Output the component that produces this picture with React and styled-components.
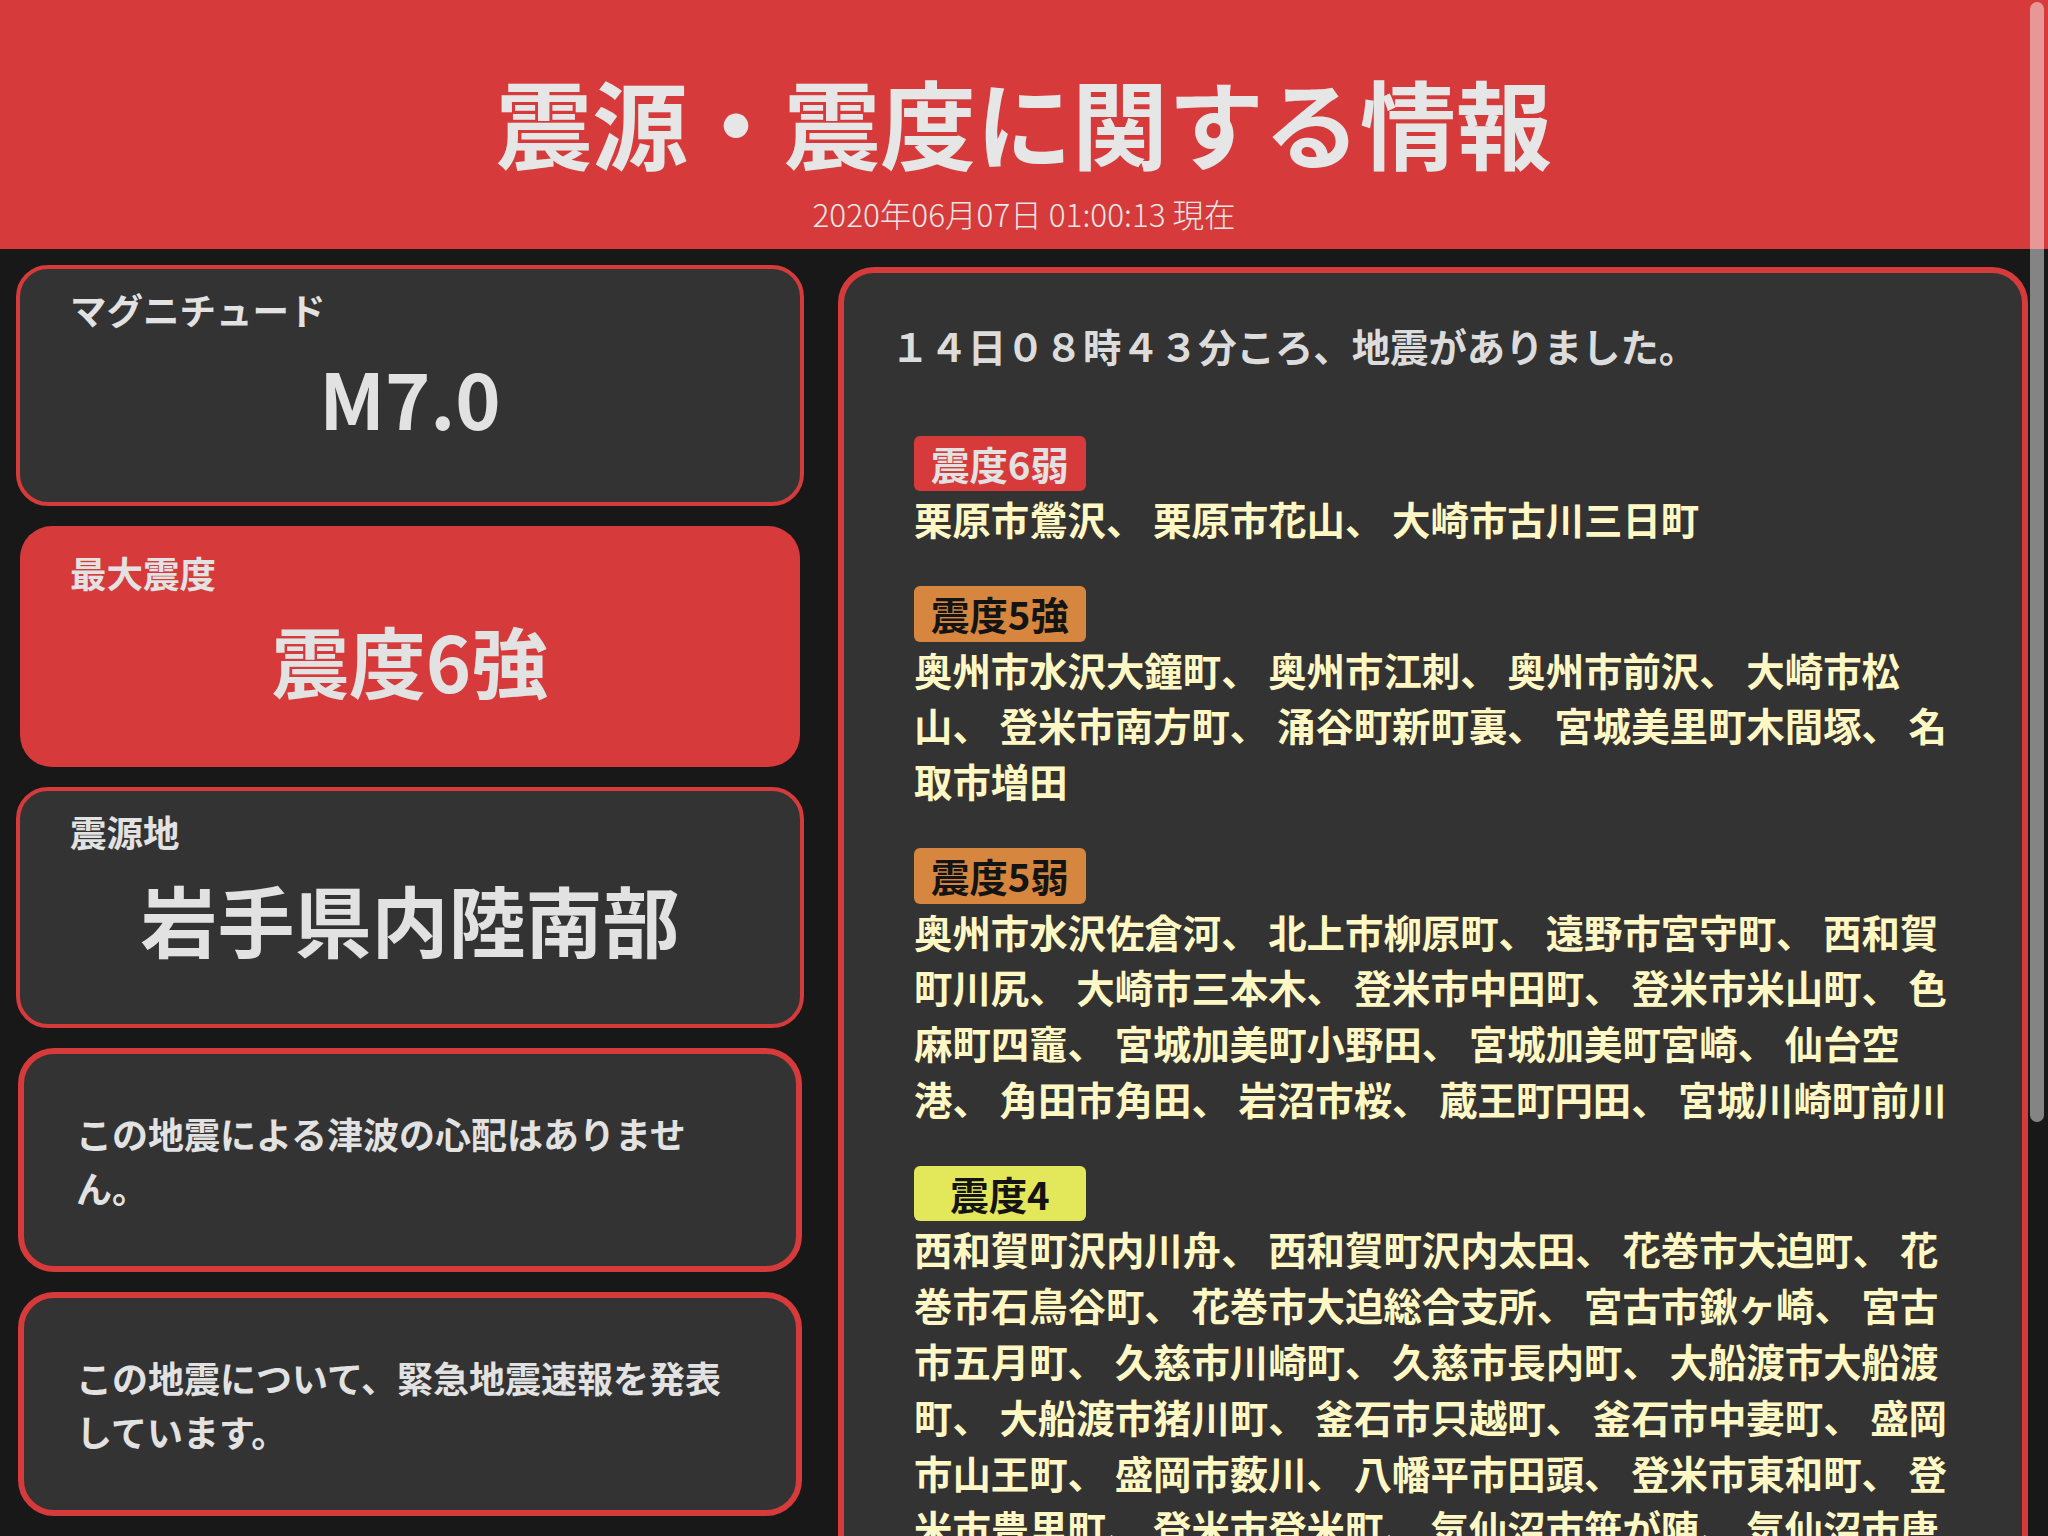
import React from 'react';
import styled, { createGlobalStyle, css } from 'styled-components';

const RED = '#d63a3a';

const GlobalStyle = createGlobalStyle`
  html, body {
    margin: 0;
    padding: 0;
    background: #181818;
    overflow: hidden;
  }
  body {
    font-family: "Noto Sans CJK JP", "Noto Sans", sans-serif;
    color: #e2e2e2;
  }
`;

const Header = styled.header`
  background: ${RED};
  padding: 51px 0 12px;
  text-align: center;
  color: #e6e6e6;
`;

const Title = styled.h1`
  margin: 0;
  font-size: 96px;
  font-weight: 700;
  line-height: 139px;
`;

const Stamp = styled.div`
  font-size: 31.5px;
  font-weight: 300;
  line-height: 47px;
`;

const Main = styled.main`
  display: grid;
  grid-template-columns: 788px 1190px;
  column-gap: 34px;
  align-items: start;
  padding: 16px 20px 0 16px;
`;

const LeftColumn = styled.div`
  display: flex;
  flex-direction: column;
  gap: 20px;
`;

// summary cards on the left; $filled = red highlight card, $thick = notice cards
const Card = styled.section`
  background: #333333;
  border: 4px solid ${RED};
  border-radius: 32px;
  padding: 15px 50px 50px;

  ${(p) =>
    p.$filled &&
    css`
      background: ${RED};
      border: none;
      margin: 0 4px;
      padding: 21px 50px 52px;
    `}

  ${(p) =>
    p.$thick &&
    css`
      border-width: 6px;
      border-radius: 36px;
      margin: 0 2px;
      padding: 52px 52px;
    `}
`;

const Label = styled.div`
  margin-bottom: 5px;
  font-size: 36.5px;
  font-weight: 700;
  line-height: 52px;
`;

const Value = styled.div`
  font-size: 77px;
  font-weight: 700;
  line-height: 111px;
  text-align: center;
`;

const Notice = styled.p`
  margin: 0;
  font-size: 36px;
  font-weight: 700;
  line-height: 54px;
`;

const Panel = styled.section`
  margin-top: 2px;
  background: #333333;
  border: 6px solid ${RED};
  border-radius: 36px;
  padding: 44px 68px 60px 47px;
`;

const Lead = styled.p`
  margin: 0 0 61px -4px;
  padding-left: 4px;
  font-size: 38.4px;
  font-weight: 700;
  line-height: 57.6px;
  color: #dcdcdc;
`;

const Groups = styled.div`
  margin-left: 23px;
`;

const Group = styled.div`
  margin-bottom: 39px;
`;

const badgeColors = {
  red: { bg: RED, fg: '#e2e2e2' },
  orange: { bg: '#d6863e', fg: '#141414' },
  yellow: { bg: '#e2e85a', fg: '#141414' },
};

const Badge = styled.div`
  width: 172px;
  height: 55.6px;
  border-radius: 6px;
  background: ${(p) => badgeColors[p.$tone].bg};
  color: ${(p) => badgeColors[p.$tone].fg};
  font-size: 38.4px;
  font-weight: 700;
  line-height: 55.6px;
  text-align: center;
`;

const Places = styled.p`
  margin: 0;
  font-size: 38.4px;
  font-weight: 700;
  line-height: 55.8px;
  color: #fff8c4;
`;

const ScrollThumb = styled.div`
  position: fixed;
  top: 2px;
  right: 4px;
  width: 14px;
  height: 1120px;
  border-radius: 7px;
  background: rgba(255, 255, 255, 0.47);
`;

const groups = [
  {
    level: '震度6弱',
    tone: 'red',
    places: ['栗原市鶯沢', '栗原市花山', '大崎市古川三日町'],
  },
  {
    level: '震度5強',
    tone: 'orange',
    places: [
      '奥州市水沢大鐘町', '奥州市江刺', '奥州市前沢', '大崎市松山', '登米市南方町',
      '涌谷町新町裏', '宮城美里町木間塚', '名取市増田',
    ],
  },
  {
    level: '震度5弱',
    tone: 'orange',
    places: [
      '奥州市水沢佐倉河', '北上市柳原町', '遠野市宮守町', '西和賀町川尻', '大崎市三本木',
      '登米市中田町', '登米市米山町', '色麻町四竈', '宮城加美町小野田', '宮城加美町宮崎',
      '仙台空港', '角田市角田', '岩沼市桜', '蔵王町円田', '宮城川崎町前川',
    ],
  },
  {
    level: '震度4',
    tone: 'yellow',
    places: [
      '西和賀町沢内川舟', '西和賀町沢内太田', '花巻市大迫町', '花巻市石鳥谷町',
      '花巻市大迫総合支所', '宮古市鍬ヶ崎', '宮古市五月町', '久慈市川崎町', '久慈市長内町',
      '大船渡市大船渡町', '大船渡市猪川町', '釜石市只越町', '釜石市中妻町', '盛岡市山王町',
      '盛岡市薮川', '八幡平市田頭', '登米市東和町', '登米市豊里町', '登米市登米町',
      '気仙沼市笹が陣', '気仙沼市唐桑町', '気仙沼市赤岩', '南三陸町志津川', '石巻市桃生町',
      '東松島市矢本', '松島町高城', '利府町利府', '仙台青葉区大倉', '仙台宮城野区五輪',
    ],
  },
];

export default function App() {
  return (
    <>
      <GlobalStyle />
      <Header>
        <Title>震源・震度に関する情報</Title>
        <Stamp>2020年06月07日 01:00:13 現在</Stamp>
      </Header>
      <Main>
        <LeftColumn>
          <Card>
            <Label>マグニチュード</Label>
            <Value>M7.0</Value>
          </Card>
          <Card $filled>
            <Label>最大震度</Label>
            <Value>震度6強</Value>
          </Card>
          <Card>
            <Label>震源地</Label>
            <Value>岩手県内陸南部</Value>
          </Card>
          <Card $thick>
            <Notice>この地震による津波の心配はありません。</Notice>
          </Card>
          <Card $thick>
            <Notice>この地震について、緊急地震速報を発表しています。</Notice>
          </Card>
        </LeftColumn>
        <Panel>
          <Lead>１４日０８時４３分ころ、地震がありました。</Lead>
          <Groups>
            {groups.map((g) => (
              <Group key={g.level}>
                <Badge $tone={g.tone}>{g.level}</Badge>
                <Places>{g.places.join('、 ')}</Places>
              </Group>
            ))}
          </Groups>
        </Panel>
      </Main>
      <ScrollThumb />
    </>
  );
}
